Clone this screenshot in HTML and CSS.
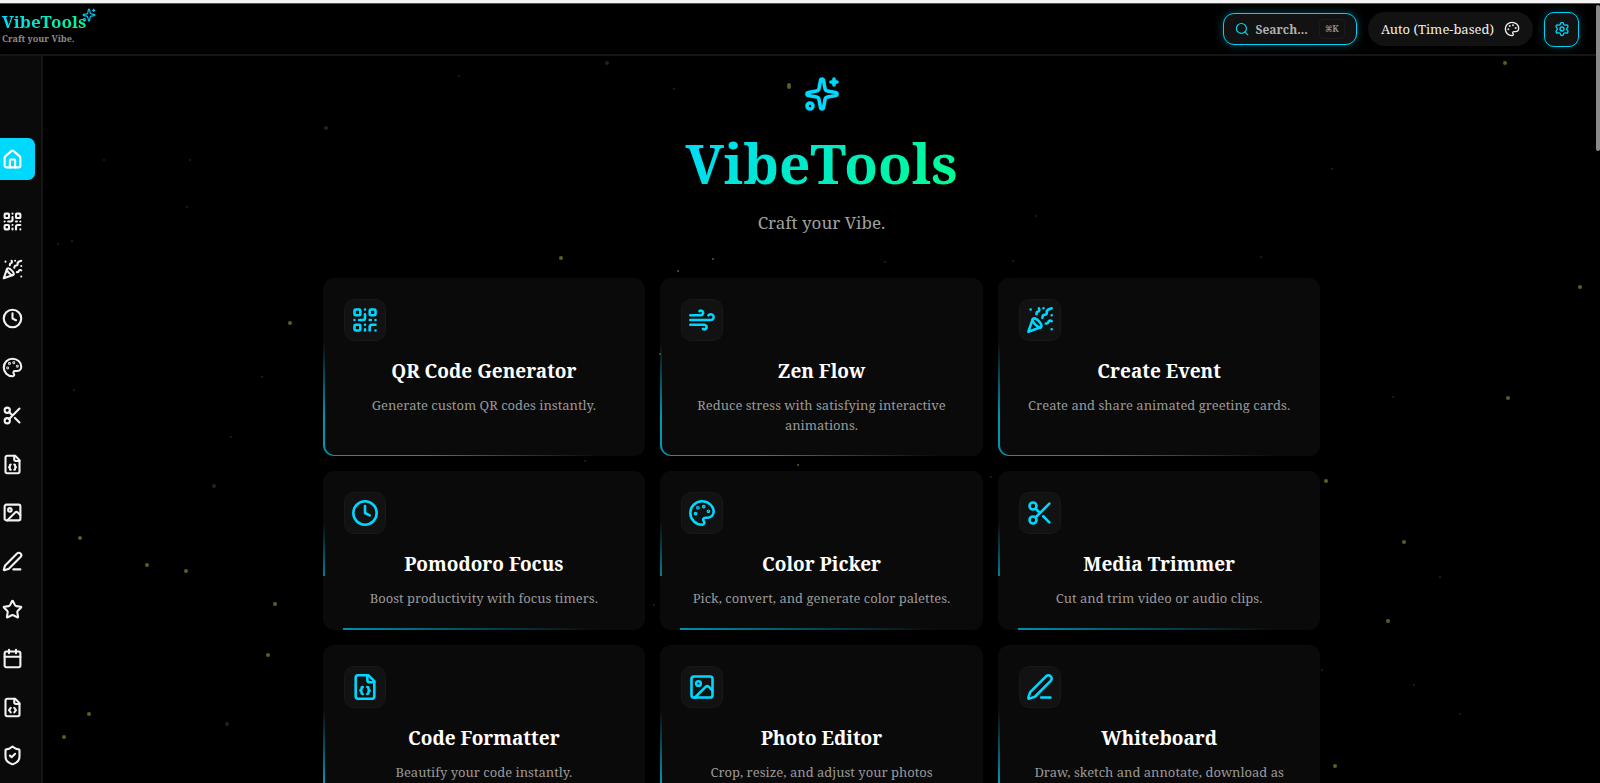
FILE: index.html
```html
<!DOCTYPE html>
<html lang="en">
<head>
<meta charset="utf-8">
<meta name="viewport" content="width=device-width, initial-scale=1">
<title>VibeTools</title>
<link rel="stylesheet" href="styles.css">
</head>
<body>
<svg class="sprite" aria-hidden="true">
  <symbol id="sparkles" viewBox="0 0 24 24"><path d="M11.017 2.814a1 1 0 0 1 1.966 0l1.051 5.558a2 2 0 0 0 1.594 1.594l5.558 1.051a1 1 0 0 1 0 1.966l-5.558 1.051a2 2 0 0 0-1.594 1.594l-1.051 5.558a1 1 0 0 1-1.966 0l-1.051-5.558a2 2 0 0 0-1.594-1.594l-5.558-1.051a1 1 0 0 1 0-1.966l5.558-1.051a2 2 0 0 0 1.594-1.594z"/><path d="M20 2v4M22 4h-4"/><circle cx="4" cy="20" r="2"/></symbol>
  <symbol id="home" viewBox="0 0 24 24"><path d="M15 21v-8a1 1 0 0 0-1-1h-4a1 1 0 0 0-1 1v8"/><path d="M3 10a2 2 0 0 1 .709-1.528l7-6a2 2 0 0 1 2.582 0l7 6A2 2 0 0 1 21 10v9a2 2 0 0 1-2 2H5a2 2 0 0 1-2-2z"/></symbol>
  <symbol id="qr" viewBox="0 0 24 24"><rect width="5" height="5" x="3" y="3" rx="1"/><rect width="5" height="5" x="16" y="3" rx="1"/><rect width="5" height="5" x="3" y="16" rx="1"/><path d="M21 16h-3a2 2 0 0 0-2 2v3M21 21v.01M12 7v3a2 2 0 0 1-2 2H7M3 12h.01M12 3h.01M12 16v.01M16 12h1M21 12v.01M12 21v-1"/></symbol>
  <symbol id="party" viewBox="0 0 24 24"><path d="M5.8 11.3 2 22l10.7-3.79M4 3h.01M22 8h.01M15 2h.01M22 20h.01"/><path d="m22 2-2.24.75a2.9 2.9 0 0 0-1.96 3.12c.1.86-.57 1.63-1.45 1.63h-.38c-.86 0-1.6.6-1.76 1.44L14 10"/><path d="m22 13-.82-.33c-.86-.34-1.82.2-1.98 1.11c-.11.7-.72 1.22-1.43 1.22H17"/><path d="m11 2 .33.82c.34.86-.2 1.82-1.11 1.98C9.52 4.9 9 5.52 9 6.23V7"/><path d="M11 13c1.93 1.93 2.83 4.17 2 5-.83.83-3.07-.07-5-2-1.93-1.93-2.83-4.17-2-5 .83-.83 3.07.07 5 2Z"/></symbol>
  <symbol id="clock" viewBox="0 0 24 24"><circle cx="12" cy="12" r="10"/><path d="M12 6v6l4 2"/></symbol>
  <symbol id="palette" viewBox="0 0 24 24"><path d="M12 22a1 1 0 0 1 0-20 10 9 0 0 1 10 9 5 5 0 0 1-5 5h-2.25a1.75 1.75 0 0 0-1.4 2.8l.3.4a1.75 1.75 0 0 1-1.4 2.8z"/><circle class="dot" cx="13.5" cy="6.5" r=".5"/><circle class="dot" cx="17.5" cy="10.5" r=".5"/><circle class="dot" cx="6.5" cy="12.5" r=".5"/><circle class="dot" cx="8.5" cy="7.5" r=".5"/></symbol>
  <symbol id="scissors" viewBox="0 0 24 24"><circle cx="6" cy="6" r="3"/><circle cx="6" cy="18" r="3"/><path d="M8.12 8.12 12 12M20 4 8.12 15.88M14.8 14.8 20 20"/></symbol>
  <symbol id="json" viewBox="0 0 24 24"><path d="M15 2H6a2 2 0 0 0-2 2v16a2 2 0 0 0 2 2h12a2 2 0 0 0 2-2V7Z"/><path d="M14 2v4a2 2 0 0 0 2 2h4"/><path d="M10 12a1 1 0 0 0-1 1v1a1 1 0 0 1-1 1 1 1 0 0 1 1 1v1a1 1 0 0 0 1 1M14 18a1 1 0 0 0 1-1v-1a1 1 0 0 1 1-1 1 1 0 0 1-1-1v-1a1 1 0 0 0-1-1"/></symbol>
  <symbol id="code" viewBox="0 0 24 24"><path d="M15 2H6a2 2 0 0 0-2 2v16a2 2 0 0 0 2 2h12a2 2 0 0 0 2-2V7Z"/><path d="M14 2v4a2 2 0 0 0 2 2h4"/><path d="M10 12.5 8 15l2 2.500M14 12.5l2 2.500-2 2.500"/></symbol>
  <symbol id="image" viewBox="0 0 24 24"><rect width="18" height="18" x="3" y="3" rx="2"/><circle cx="9" cy="9" r="2"/><path d="m21 15-3.086-3.086a2 2 0 0 0-2.828 0L6 21"/></symbol>
  <symbol id="pen" viewBox="0 0 24 24"><path d="M13 21h8M21.174 6.812a1 1 0 0 0-3.986-3.987L3.842 16.174a2 2 0 0 0-.5.83l-1.321 4.352a.5.5 0 0 0 .623.622l4.353-1.32a2 2 0 0 0 .83-.497z"/></symbol>
  <symbol id="star" viewBox="0 0 24 24"><path d="M11.525 2.295a.53.53 0 0 1 .95 0l2.31 4.679a2.123 2.123 0 0 0 1.595 1.16l5.166.756a.53.53 0 0 1 .294.904l-3.736 3.638a2.123 2.123 0 0 0-.611 1.878l.882 5.14a.53.53 0 0 1-.771.56l-4.618-2.428a2.122 2.122 0 0 0-1.973 0L6.396 21.01a.53.53 0 0 1-.77-.56l.881-5.139a2.122 2.122 0 0 0-.611-1.879L2.16 9.795a.53.53 0 0 1 .294-.906l5.165-.755a2.122 2.122 0 0 0 1.597-1.16z"/></symbol>
  <symbol id="calendar" viewBox="0 0 24 24"><path d="M8 2v4M16 2v4M3 10h18"/><rect width="18" height="18" x="3" y="4" rx="2"/></symbol>
  <symbol id="shield" viewBox="0 0 24 24"><path d="M20 13c0 5-3.500 7.500-7.660 8.950a1 1 0 0 1-.67-.01C7.500 20.500 4 18 4 13V6a1 1 0 0 1 1-1c2 0 4.500-1.200 6.240-2.720a1.170 1.170 0 0 1 1.520 0C14.510 3.810 17 5 19 5a1 1 0 0 1 1 1z"/><path d="m9 12 2 2 4-4"/></symbol>
  <symbol id="wind" viewBox="0 0 24 24"><path d="M12.800 19.600A2 2 0 1 0 14 16H2M17.500 8a2.500 2.500 0 1 1 2 4H2M9.800 4.400A2 2 0 1 1 11 8H2"/></symbol>
  <symbol id="search" viewBox="0 0 24 24"><circle cx="11" cy="11" r="8.500"/><path d="m22 22-5-5"/></symbol>
  <symbol id="settings" viewBox="0 0 24 24"><path d="M9.671 4.136a2.340 2.340 0 0 1 4.659 0 2.340 2.340 0 0 0 3.319 1.915 2.340 2.340 0 0 1 2.330 4.033 2.340 2.340 0 0 0 0 3.831 2.340 2.340 0 0 1-2.330 4.033 2.340 2.340 0 0 0-3.319 1.915 2.340 2.340 0 0 1-4.659 0 2.340 2.340 0 0 0-3.320-1.915 2.340 2.340 0 0 1-2.330-4.033 2.340 2.340 0 0 0 0-3.831A2.340 2.340 0 0 1 6.350 6.051a2.340 2.340 0 0 0 3.319-1.915"/><circle cx="12" cy="12" r="3"/></symbol>
</svg>

<header class="topbar">
  <a class="brand" href="#">
    <span class="brand-name">VibeTools</span>
    <svg class="icon brand-icon"><use href="#sparkles"/></svg>
    <span class="brand-tag">Craft your Vibe.</span>
  </a>
  <div class="actions">
    <button class="search" type="button"><svg class="icon icon-14"><use href="#search"/></svg><span>Search...</span><kbd>⌘K</kbd></button>
    <button class="theme" type="button">Auto (Time-based)<svg class="icon icon-16"><use href="#palette"/></svg></button>
    <button class="settings" type="button" aria-label="Settings"><svg class="icon icon-16"><use href="#settings"/></svg></button>
  </div>
</header>

<div class="shell">
  <nav class="sidebar" aria-label="Tools">
    <a class="side-link active" href="#" aria-label="Home"><svg class="icon icon-21"><use href="#home"/></svg></a>
    <div class="side-list">
      <a class="side-link" href="#" aria-label="QR Code Generator"><svg class="icon icon-21"><use href="#qr"/></svg></a>
      <a class="side-link" href="#" aria-label="Create Event"><svg class="icon icon-21"><use href="#party"/></svg></a>
      <a class="side-link" href="#" aria-label="Pomodoro Focus"><svg class="icon icon-21"><use href="#clock"/></svg></a>
      <a class="side-link" href="#" aria-label="Color Picker"><svg class="icon icon-21"><use href="#palette"/></svg></a>
      <a class="side-link" href="#" aria-label="Media Trimmer"><svg class="icon icon-21"><use href="#scissors"/></svg></a>
      <a class="side-link" href="#" aria-label="Code Formatter"><svg class="icon icon-21"><use href="#json"/></svg></a>
      <a class="side-link" href="#" aria-label="Photo Editor"><svg class="icon icon-21"><use href="#image"/></svg></a>
      <a class="side-link" href="#" aria-label="Whiteboard"><svg class="icon icon-21"><use href="#pen"/></svg></a>
      <a class="side-link" href="#" aria-label="Favorites"><svg class="icon icon-21"><use href="#star"/></svg></a>
      <a class="side-link" href="#" aria-label="Calendar"><svg class="icon icon-21"><use href="#calendar"/></svg></a>
      <a class="side-link" href="#" aria-label="Code"><svg class="icon icon-21"><use href="#code"/></svg></a>
      <a class="side-link" href="#" aria-label="Privacy"><svg class="icon icon-21"><use href="#shield"/></svg></a>
    </div>
  </nav>

  <main class="content">
    <section class="hero">
      <svg class="icon icon-36"><use href="#sparkles"/></svg>
      <h1>VibeTools</h1>
      <p>Craft your Vibe.</p>
    </section>
    <section class="grid">
      <a class="card" href="#"><span class="tile"><svg class="icon icon-28"><use href="#qr"/></svg></span><h2>QR Code Generator</h2><p>Generate custom QR codes instantly.</p></a>
      <a class="card" href="#"><span class="tile"><svg class="icon icon-28"><use href="#wind"/></svg></span><h2>Zen Flow</h2><p>Reduce stress with satisfying interactive animations.</p></a>
      <a class="card" href="#"><span class="tile"><svg class="icon icon-28"><use href="#party"/></svg></span><h2>Create Event</h2><p>Create and share animated greeting cards.</p></a>
      <a class="card split" href="#"><span class="tile"><svg class="icon icon-28"><use href="#clock"/></svg></span><h2>Pomodoro Focus</h2><p>Boost productivity with focus timers.</p></a>
      <a class="card split" href="#"><span class="tile"><svg class="icon icon-28"><use href="#palette"/></svg></span><h2>Color Picker</h2><p>Pick, convert, and generate color palettes.</p></a>
      <a class="card split" href="#"><span class="tile"><svg class="icon icon-28"><use href="#scissors"/></svg></span><h2>Media Trimmer</h2><p>Cut and trim video or audio clips.</p></a>
      <a class="card" href="#"><span class="tile"><svg class="icon icon-28"><use href="#json"/></svg></span><h2>Code Formatter</h2><p>Beautify your code instantly.</p></a>
      <a class="card" href="#"><span class="tile"><svg class="icon icon-28"><use href="#image"/></svg></span><h2>Photo Editor</h2><p>Crop, resize, and adjust your photos</p></a>
      <a class="card" href="#"><span class="tile"><svg class="icon icon-28"><use href="#pen"/></svg></span><h2>Whiteboard</h2><p>Draw, sketch and annotate, download as</p></a>
    </section>
  </main>
</div>

<svg class="particles" aria-hidden="true">
  <g class="bright">
    <circle cx="1505" cy="63" r="2"/><circle cx="561" cy="258" r="2"/><circle cx="290" cy="323" r="2"/><circle cx="1580" cy="287" r="2"/><circle cx="1508" cy="398" r="2"/><circle cx="186" cy="571" r="2"/><circle cx="147" cy="565" r="2"/><circle cx="1388" cy="621" r="2"/><circle cx="1326" cy="481" r="2"/><circle cx="1404" cy="542" r="2"/><circle cx="80" cy="538" r="2"/><circle cx="89" cy="714" r="2"/><circle cx="64" cy="737" r="2"/><circle cx="1335" cy="766" r="2"/><circle cx="275" cy="604" r="2"/><circle cx="268" cy="655" r="2"/><circle cx="798" cy="465" r="1"/><circle cx="660" cy="354" r="1"/><circle cx="713" cy="259" r="1"/><circle cx="678" cy="271" r="1"/>
    <ellipse cx="789" cy="86" rx="2" ry="3"/>
  </g>
  <g class="faint">
    <circle cx="326" cy="128" r="2"/><circle cx="214" cy="486" r="2"/><circle cx="231" cy="437" r="1"/><circle cx="227" cy="724" r="2"/><circle cx="607" cy="63" r="2"/><circle cx="459" cy="76" r="1"/><circle cx="187" cy="207" r="1"/><circle cx="190" cy="160" r="1"/><circle cx="104" cy="160" r="1"/><circle cx="674" cy="89" r="1"/><circle cx="885" cy="262" r="1"/><circle cx="1013" cy="261" r="1"/><circle cx="1036" cy="216" r="1"/><circle cx="72" cy="241" r="1"/><circle cx="58" cy="244" r="1"/><circle cx="262" cy="377" r="1"/><circle cx="1332" cy="169" r="1"/><circle cx="1261" cy="257" r="1"/><circle cx="1393" cy="397" r="1"/><circle cx="1440" cy="577" r="1"/><circle cx="1414" cy="685" r="1"/><circle cx="1460" cy="714" r="1"/><circle cx="1322" cy="670" r="1"/><circle cx="585" cy="461" r="1"/><circle cx="991" cy="477" r="1"/><circle cx="654" cy="605" r="1"/><circle cx="74" cy="390" r="1"/>
  </g>
</svg>
<div class="scroll-thumb"></div>
</body>
</html>
```

FILE: styles.css
```css
* { box-sizing: border-box; }
body {
  margin: 0;
  height: 100vh;
  display: flex;
  flex-direction: column;
  overflow: hidden;
  border-top: 3px solid #f4f4f4;
  background: #000;
  color: #fff;
  font-family: "Noto Serif", "Droid Serif", "DejaVu Serif Condensed", "DejaVu Serif", serif;
}
a { color: inherit; text-decoration: none; }
button { font-family: inherit; color: inherit; }
h1, h2, p { margin: 0; }
.sprite { display: none; }
.icon {
  display: block;
  flex: none;
  fill: none;
  stroke: currentColor;
  stroke-width: 2;
  stroke-linecap: round;
  stroke-linejoin: round;
}
.dot { fill: currentColor; }
.icon-14 { width: 14px; height: 14px; }
.icon-16 { width: 16px; height: 16px; }
.icon-21 { width: 21px; height: 21px; stroke-width: 2.4; }
.icon-28 { width: 28px; height: 28px; stroke-width: 2.2; }
.icon-36 { width: 36px; height: 36px; stroke-width: 2.4; }

.topbar {
  flex: none;
  height: 53px;
  display: flex;
  align-items: center;
  justify-content: space-between;
  padding: 0 21px 0 2px;
  border-top: 1px solid #555;
  border-bottom: 2px solid #151515;
}
.brand { position: relative; display: flex; flex-direction: column; align-items: flex-start; }
.brand-name {
  font-size: 17px;
  line-height: 20px;
  font-weight: 700;
  color: transparent;
  background: linear-gradient(135deg, #00d9ff, #00ff88);
  background-clip: text;
  -webkit-background-clip: text;
}
.brand-tag { font-size: 9px; line-height: 14px; font-weight: 700; color: #8c8c8c; }
.brand-icon { position: absolute; top: -4px; right: -10px; width: 14px; height: 14px; color: #00c8f0; }
.actions { display: flex; align-items: center; gap: 11px; }
.search, .theme, .settings { display: flex; align-items: center; background: #121212; }
.search {
  height: 32px;
  gap: 7px;
  padding: 0 11px;
  border: 1px solid #00d0f5;
  border-radius: 11px;
  box-shadow: 0 0 8px rgba(0, 217, 255, .35);
  font-size: 12px;
  font-weight: 700;
  color: #b0b0b0;
}
.search .icon { color: #00d9ff; }
kbd {
  margin-left: 4px;
  padding: 0 5px;
  border: 1px solid #1c1c1c;
  border-radius: 4px;
  font: inherit;
  font-size: 9px;
  line-height: 18px;
  color: #8e8e8e;
}
.theme {
  height: 34px;
  gap: 10px;
  padding: 0 13px;
  border: 0;
  border-radius: 17px;
  font-size: 13px;
  color: #eee;
}
.settings {
  width: 35px;
  height: 35px;
  justify-content: center;
  padding: 0;
  border: 1px solid #00d0f5;
  border-radius: 10px;
  box-shadow: 0 0 8px rgba(0, 217, 255, .25);
  color: #00d9ff;
}

.shell { flex: 1; min-height: 0; display: flex; }
.sidebar {
  flex: none;
  width: 43px;
  display: flex;
  flex-direction: column;
  padding: 82px 0 3px;
  background: #0a0a0a;
  border-right: 2px solid #151515;
}
.side-link { display: flex; align-items: center; padding-left: 2px; color: #f2f2f2; }
.side-list { flex: 1; display: flex; flex-direction: column; margin-top: 17px; }
.side-list .side-link { flex: 1; }
.active { width: 35px; height: 42px; border-radius: 0 7px 7px 0; background: #00d9ff; color: #fff; }

.content { flex: 1; min-width: 0; overflow: hidden; padding: 20px 15px 0; }
.hero { display: flex; flex-direction: column; align-items: center; text-align: center; }
.hero .icon { color: #00d9ff; }
.hero h1 {
  margin-top: 13px;
  font-size: 55px;
  line-height: 76px;
  font-weight: 700;
  color: transparent;
  background: linear-gradient(135deg, #00d9ff, #00ff88);
  background-clip: text;
  -webkit-background-clip: text;
}
.hero p { margin-top: 7px; font-size: 17px; line-height: 30px; color: #a0a0a0; }
.grid {
  display: grid;
  grid-template-columns: repeat(3, 1fr);
  gap: 15px;
  max-width: 998px;
  margin: 40px auto 0;
}
.card {
  position: relative;
  min-height: 178px;
  padding: 20px 20px 20px 19px;
  border: 1px solid transparent;
  border-left-width: 2px;
  border-radius: 11px;
  background:
    linear-gradient(#0a0a0a, #0a0a0a) padding-box,
    radial-gradient(ellipse 86% 64% at 0 100%, #0097b4 35%, #0a0a0a) border-box;
  text-align: center;
}
.split { min-height: 0; padding-bottom: 21px; background: #0a0a0a; }
.split::before, .split::after { content: ""; position: absolute; }
.split::before { left: -2px; top: 50px; width: 2px; height: 54px; background: linear-gradient(transparent, #007f98); }
.split::after { left: 18px; right: 20px; bottom: -1px; height: 2px; background: linear-gradient(90deg, #0090ac, #0a0a0a 90%); }
.tile {
  width: 42px;
  height: 42px;
  display: flex;
  align-items: center;
  justify-content: center;
  border: 1px solid #181818;
  border-radius: 10px;
  background: #121212;
  color: #00d9ff;
}
.card h2 { margin-top: 15px; font-size: 19px; line-height: 31px; font-weight: 700; }
.card p { margin-top: 8px; font-size: 13px; line-height: 20px; color: #999; }

.particles { position: absolute; inset: 0; width: 100%; height: 100%; pointer-events: none; }
.bright { fill: #5d5f1c; }
.faint { fill: #24250f; }
.scroll-thumb { position: absolute; top: 5px; right: 0; width: 4px; height: 146px; border-radius: 2px; background: #8a8a8a; }
```
